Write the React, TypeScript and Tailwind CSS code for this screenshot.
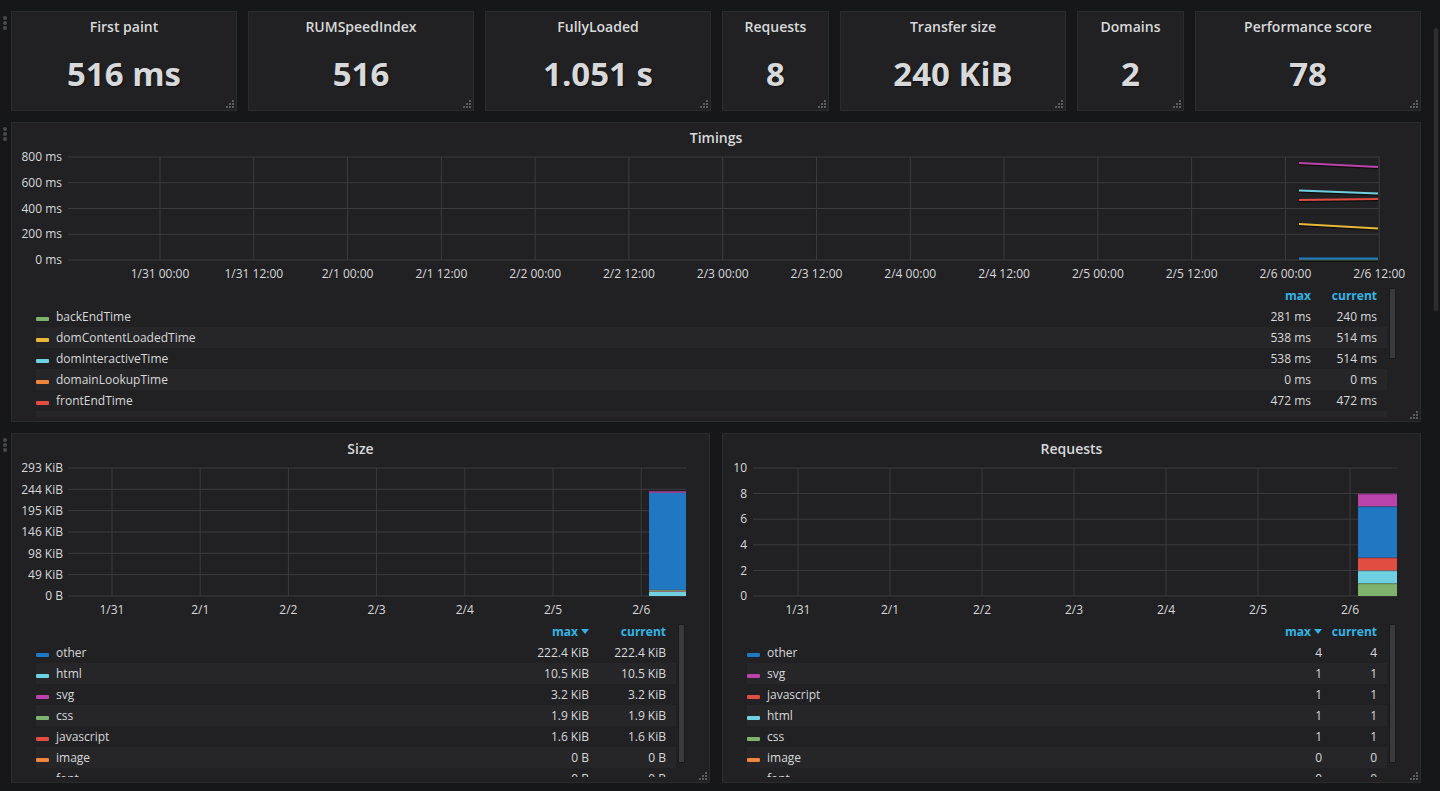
import React from "react";

const C = {
  green: "#7eb26d",
  yellow: "#eab839",
  cyan: "#6ed0e0",
  orange: "#ef843c",
  red: "#e24d42",
  blue: "#1f78c1",
  magenta: "#ba43a9",
};

const GRID = "#3b3b3e";
const LABEL = "#d8d9da";

function DragHandle() {
  return (
    <div className="absolute left-[-8px] top-[5px] flex flex-col gap-[1px]">
      <div className="w-[4px] h-[4px] rounded-full bg-[#4a4a4c]" />
      <div className="w-[4px] h-[4px] rounded-full bg-[#4a4a4c]" />
      <div className="w-[4px] h-[4px] rounded-full bg-[#4a4a4c]" />
    </div>
  );
}

function ResizeHandle() {
  return (
    <svg className="absolute right-[2px] bottom-[2px]" width="9" height="9" viewBox="0 0 9 9">
      <rect x="7" y="1" width="2" height="2" fill="#5c5c5e" />
      <rect x="4" y="4" width="2" height="2" fill="#5c5c5e" />
      <rect x="7" y="4" width="2" height="2" fill="#5c5c5e" />
      <rect x="1" y="7" width="2" height="2" fill="#5c5c5e" />
      <rect x="4" y="7" width="2" height="2" fill="#5c5c5e" />
      <rect x="7" y="7" width="2" height="2" fill="#5c5c5e" />
    </svg>
  );
}

function Stat({ title, value, w }: { title: string; value: string; w: string }) {
  return (
    <div className={`relative h-[100px] ${w} shrink-0 bg-[#212124] border border-[#2b2b2e] flex flex-col items-center`}>
      <div className="h-[29px] flex items-center text-[14px] font-semibold text-[#d8d9da]">{title}</div>
      <div className="mt-[13px] h-[38px] flex items-center text-[33px] font-bold text-[#d8d9da] leading-none [text-shadow:1px_1px_1px_rgba(0,0,0,0.55)]">
        {value}
      </div>
      <ResizeHandle />
    </div>
  );
}

type Row = { name: string; color: string; max: string; cur: string };

function Legend({
  rows,
  h,
  maxW,
  curW,
  sortable,
  thumbH,
  extraStripe,
}: {
  rows: Row[];
  h: string;
  maxW: string;
  curW: string;
  sortable: boolean;
  thumbH: string;
  extraStripe?: boolean;
}) {
  return (
    <div className={`flex pl-[24px] pr-[24px] ${h} overflow-hidden shrink-0`}>
      <div className="flex-1 flex flex-col text-[12px]">
        <div className="h-[21px] shrink-0 flex items-center justify-end pr-[10px] font-bold text-[#33b5e5]">
          <div className={`${maxW} flex items-center justify-end`}>
            max
            {sortable && (
              <svg width="8" height="5" viewBox="0 0 8 5" className="ml-[3px]">
                <path d="M0 0 L8 0 L4 5 Z" fill="#33b5e5" />
              </svg>
            )}
          </div>
          <div className={`${curW} text-right`}>current</div>
        </div>
        {rows.map((r, i) => (
          <div
            key={r.name}
            className={`h-[21px] shrink-0 flex items-center pr-[10px] ${i % 2 === 1 ? "bg-[#262629]" : ""}`}
          >
            <div className="w-[13px] h-[4px] rounded-[1px] mt-[5px] shrink-0" style={{ backgroundColor: r.color }} />
            <div className="ml-[7px] flex-1 text-[#d8d9da]">{r.name}</div>
            <div className={`${maxW} text-right text-[#d8d9da]`}>{r.max}</div>
            <div className={`${curW} text-right text-[#d8d9da]`}>{r.cur}</div>
          </div>
        ))}
        {extraStripe && <div className="h-[21px] shrink-0 bg-[#262629]" />}
      </div>
      <div className="ml-[2px] w-[7px] shrink-0">
        <div className={`mt-[3px] ${thumbH} w-[7px] bg-[#3a3a3d] border border-[#1a1a1c]`} />
      </div>
    </div>
  );
}

function TimingsChart() {
  const ys = [
    { y: 157, t: "800 ms" },
    { y: 182.75, t: "600 ms" },
    { y: 208.5, t: "400 ms" },
    { y: 234.25, t: "200 ms" },
    { y: 260, t: "0 ms" },
  ];
  const xl = [
    "1/31 00:00",
    "1/31 12:00",
    "2/1 00:00",
    "2/1 12:00",
    "2/2 00:00",
    "2/2 12:00",
    "2/3 00:00",
    "2/3 12:00",
    "2/4 00:00",
    "2/4 12:00",
    "2/5 00:00",
    "2/5 12:00",
    "2/6 00:00",
    "2/6 12:00",
  ];
  const step = (1379.2 - 160) / 13;
  const lines = [
    { c: C.magenta, y1: 163, y2: 167 },
    { c: C.cyan, y1: 190.5, y2: 193.5 },
    { c: C.red, y1: 200, y2: 199 },
    { c: C.yellow, y1: 224, y2: 228.5 },
    { c: C.green, y1: 259.5, y2: 259.5 },
    { c: C.blue, y1: 258.5, y2: 258.5 },
  ];
  return (
    <svg width="1408" height="137" viewBox="12 148 1408 137" className="block shrink-0">
      {ys.map((a) => (
        <g key={a.t}>
          <line x1="68" x2="1379.2" y1={a.y} y2={a.y} stroke={GRID} strokeWidth="1" />
          <text x="62" y={a.y} dy="0.35em" textAnchor="end" fontSize="12" fill={LABEL}>
            {a.t}
          </text>
        </g>
      ))}
      {xl.map((t, i) => {
        const x = 160 + i * step;
        return (
          <g key={t}>
            <line x1={x} x2={x} y1="157" y2="260" stroke={GRID} strokeWidth="1" />
            <text x={x} y="273.5" dy="0.35em" textAnchor="middle" fontSize="12" fill={LABEL}>
              {t}
            </text>
          </g>
        );
      })}
      {lines.map((l, i) => (
        <g key={i}>
          <line x1="1299" x2="1378" y1={l.y1 + 1.5} y2={l.y2 + 1.5} stroke="#000" strokeOpacity="0.6" strokeWidth="1.5" />
          <line x1="1299" x2="1378" y1={l.y1} y2={l.y2} stroke={l.c} strokeWidth="2" />
        </g>
      ))}
    </svg>
  );
}

function SizeChart() {
  const labels = ["293 KiB", "244 KiB", "195 KiB", "146 KiB", "98 KiB", "49 KiB", "0 B"];
  const ystep = (596 - 468) / 6;
  const xs = ["1/31", "2/1", "2/2", "2/3", "2/4", "2/5", "2/6"];
  const xstep = 88.2;
  const k = 128 / 293;
  const segs = [
    { c: C.cyan, v: 10.5 },
    { c: C.red, v: 1.6 },
    { c: C.green, v: 1.9 },
    { c: C.blue, v: 222.4 },
    { c: C.magenta, v: 3.2 },
  ];
  let base = 596;
  return (
    <svg width="697" height="162" viewBox="12 459 697 162" className="block shrink-0">
      {labels.map((t, i) => {
        const y = 468 + i * ystep;
        return (
          <g key={t}>
            <line x1="68" x2="686" y1={y} y2={y} stroke={GRID} strokeWidth="1" />
            <text x="63" y={y} dy="0.35em" textAnchor="end" fontSize="12" fill={LABEL}>
              {t}
            </text>
          </g>
        );
      })}
      {xs.map((t, i) => {
        const x = 112 + i * xstep;
        return (
          <g key={t}>
            <line x1={x} x2={x} y1="468" y2="596" stroke={GRID} strokeWidth="1" />
            <text x={x} y="610" dy="0.35em" textAnchor="middle" fontSize="12" fill={LABEL}>
              {t}
            </text>
          </g>
        );
      })}
      {segs.map((s, i) => {
        const hh = s.v * k;
        base -= hh;
        return <rect key={i} x="649" y={base} width="37" height={hh} fill={s.c} />;
      })}
    </svg>
  );
}

function RequestsChart() {
  const labels = ["10", "8", "6", "4", "2", "0"];
  const ystep = (596 - 468) / 5;
  const xs = ["1/31", "2/1", "2/2", "2/3", "2/4", "2/5", "2/6"];
  const u = 12.8;
  const segs = [
    { c: C.green, v: 1 },
    { c: C.cyan, v: 1 },
    { c: C.red, v: 1 },
    { c: C.blue, v: 4 },
    { c: C.magenta, v: 1 },
  ];
  let base = 596;
  return (
    <svg width="697" height="162" viewBox="723 459 697 162" className="block shrink-0">
      {labels.map((t, i) => {
        const y = 468 + i * ystep;
        return (
          <g key={t}>
            <line x1="753" x2="1397" y1={y} y2={y} stroke={GRID} strokeWidth="1" />
            <text x="747" y={y} dy="0.35em" textAnchor="end" fontSize="12" fill={LABEL}>
              {t}
            </text>
          </g>
        );
      })}
      {xs.map((t, i) => {
        const x = 798 + i * 92;
        return (
          <g key={t}>
            <line x1={x} x2={x} y1="468" y2="596" stroke={GRID} strokeWidth="1" />
            <text x={x} y="610" dy="0.35em" textAnchor="middle" fontSize="12" fill={LABEL}>
              {t}
            </text>
          </g>
        );
      })}
      {segs.map((s, i) => {
        const hh = s.v * u;
        base -= hh;
        return (
          <g key={i}>
            <rect x="1358" y={base} width="39" height={hh} fill={s.c} />
            <line x1="1358" x2="1397" y1={base + 0.5} y2={base + 0.5} stroke="#000" strokeOpacity="0.25" />
          </g>
        );
      })}
    </svg>
  );
}

const timingRows: Row[] = [
  { name: "backEndTime", color: C.green, max: "281 ms", cur: "240 ms" },
  { name: "domContentLoadedTime", color: C.yellow, max: "538 ms", cur: "514 ms" },
  { name: "domInteractiveTime", color: C.cyan, max: "538 ms", cur: "514 ms" },
  { name: "domainLookupTime", color: C.orange, max: "0 ms", cur: "0 ms" },
  { name: "frontEndTime", color: C.red, max: "472 ms", cur: "472 ms" },
];

const sizeRows: Row[] = [
  { name: "other", color: C.blue, max: "222.4 KiB", cur: "222.4 KiB" },
  { name: "html", color: C.cyan, max: "10.5 KiB", cur: "10.5 KiB" },
  { name: "svg", color: C.magenta, max: "3.2 KiB", cur: "3.2 KiB" },
  { name: "css", color: C.green, max: "1.9 KiB", cur: "1.9 KiB" },
  { name: "javascript", color: C.red, max: "1.6 KiB", cur: "1.6 KiB" },
  { name: "image", color: C.orange, max: "0 B", cur: "0 B" },
  { name: "font", color: C.yellow, max: "0 B", cur: "0 B" },
];

const reqRows: Row[] = [
  { name: "other", color: C.blue, max: "4", cur: "4" },
  { name: "svg", color: C.magenta, max: "1", cur: "1" },
  { name: "javascript", color: C.red, max: "1", cur: "1" },
  { name: "html", color: C.cyan, max: "1", cur: "1" },
  { name: "css", color: C.green, max: "1", cur: "1" },
  { name: "image", color: C.orange, max: "0", cur: "0" },
  { name: "font", color: C.yellow, max: "0", cur: "0" },
];

function PanelTitle({ t }: { t: string }) {
  return (
    <div className="h-[25px] pt-[7px] shrink-0 flex justify-center text-[14px] leading-[16px] font-semibold text-[#d8d9da]">
      {t}
    </div>
  );
}

export default function App() {
  return (
    <div className="relative w-[1440px] h-[791px] overflow-hidden bg-[#161719] [font-family:'Open_Sans',sans-serif] text-[#d8d9da]">
      <div className="flex flex-col gap-[11px] pl-[11px] pt-[11px] w-[1432px]">
        <div className="relative flex gap-[11px]">
          <DragHandle />
          <Stat title="First paint" value="516 ms" w="w-[226px]" />
          <Stat title="RUMSpeedIndex" value="516" w="w-[226px]" />
          <Stat title="FullyLoaded" value="1.051 s" w="w-[226px]" />
          <Stat title="Requests" value="8" w="w-[107px]" />
          <Stat title="Transfer size" value="240 KiB" w="w-[226px]" />
          <Stat title="Domains" value="2" w="w-[107px]" />
          <Stat title="Performance score" value="78" w="w-[226px]" />
        </div>

        <div className="relative">
          <DragHandle />
          <div className="relative w-[1410px] h-[300px] bg-[#212124] border border-[#2b2b2e] flex flex-col">
            <PanelTitle t="Timings" />
            <TimingsChart />
            <Legend
              rows={timingRows}
              h="h-[132px]"
              maxW="w-[70px]"
              curW="w-[66px]"
              sortable={false}
              thumbH="h-[71px]"
              extraStripe
            />
            <ResizeHandle />
          </div>
        </div>

        <div className="relative flex gap-[12px]">
          <DragHandle />
          <div className="relative w-[699px] h-[350px] bg-[#212124] border border-[#2b2b2e] flex flex-col">
            <PanelTitle t="Size" />
            <SizeChart />
            <Legend rows={sizeRows} h="h-[156px]" maxW="w-[80px]" curW="w-[77px]" sortable={true} thumbH="h-[139px]" />
            <ResizeHandle />
          </div>
          <div className="relative w-[699px] h-[350px] bg-[#212124] border border-[#2b2b2e] flex flex-col">
            <PanelTitle t="Requests" />
            <RequestsChart />
            <Legend rows={reqRows} h="h-[156px]" maxW="w-[50px]" curW="w-[55px]" sortable={true} thumbH="h-[139px]" />
            <ResizeHandle />
          </div>
        </div>
      </div>
      <div className="absolute left-[1433px] top-[27px] w-[6px] h-[285px] rounded-[3px] bg-[#2e2e31] border border-[#1c1c1e]" />
    </div>
  );
}
